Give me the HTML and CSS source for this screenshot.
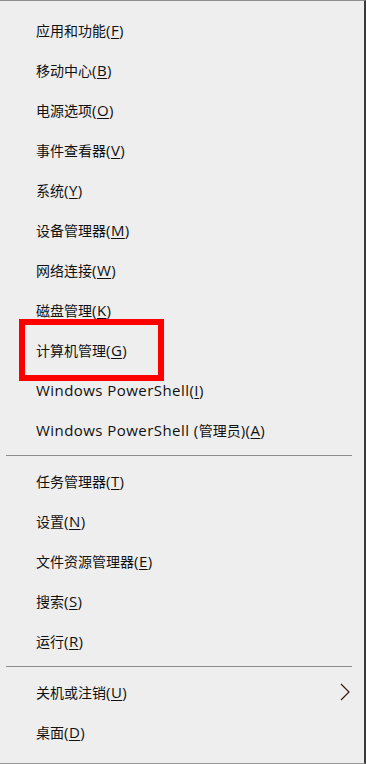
FILE: index.html
```html
<!DOCTYPE html>
<html lang="zh-CN">
<head>
<meta charset="utf-8">
<link rel="stylesheet" href="styles.css">
</head>
<body>
<div class="menu">
  <ul class="group first">
    <li class="item">应用和功能<span class="en">(<u>F</u>)</span></li>
    <li class="item">移动中心<span class="en">(<u>B</u>)</span></li>
    <li class="item">电源选项<span class="en">(<u>O</u>)</span></li>
    <li class="item">事件查看器<span class="en">(<u>V</u>)</span></li>
    <li class="item">系统<span class="en">(<u>Y</u>)</span></li>
    <li class="item">设备管理器<span class="en">(<u>M</u>)</span></li>
    <li class="item">网络连接<span class="en">(<u>W</u>)</span></li>
    <li class="item">磁盘管理<span class="en">(<u>K</u>)</span></li>
    <li class="item highlighted">计算机管理<span class="en">(<u>G</u>)</span><span class="mark"></span></li>
    <li class="item"><span class="en">Windows PowerShell(<u>I</u>)</span></li>
    <li class="item"><span class="en">Windows PowerShell (</span>管理员<span class="en">)(<u>A</u>)</span></li>
  </ul>
  <div class="sep"></div>
  <ul class="group">
    <li class="item">任务管理器<span class="en">(<u>T</u>)</span></li>
    <li class="item">设置<span class="en">(<u>N</u>)</span></li>
    <li class="item">文件资源管理器<span class="en">(<u>E</u>)</span></li>
    <li class="item">搜索<span class="en">(<u>S</u>)</span></li>
    <li class="item">运行<span class="en">(<u>R</u>)</span></li>
  </ul>
  <div class="sep"></div>
  <ul class="group">
    <li class="item has-sub"><span>关机或注销<span class="en">(<u>U</u>)</span></span>
      <svg class="chev" width="10" height="18" viewBox="0 0 10 18"><path d="M1 1 L9 9 L1 17" fill="none" stroke="#3a1a10" stroke-width="1.2"/></svg>
    </li>
    <li class="item">桌面<span class="en">(<u>D</u>)</span></li>
  </ul>
</div>
</body>
</html>
```
FILE: styles.css
```css
html, body {
  margin: 0;
  padding: 0;
  width: 366px;
  height: 764px;
  overflow: hidden;
  background: #eeeeee;
}
.menu {
  box-sizing: border-box;
  width: 366px;
  height: 764px;
  background: #eeeeee;
  border-top: 1px solid #8f8f8f;
  border-bottom: 1px solid #9a9a9a;
  border-right: 2px solid #3a3a3a;
  padding-top: 9px;
  font-family: "Noto Sans CJK SC", sans-serif;
  font-size: 14px;
  color: #111;
}
.group {
  list-style: none;
  margin: 0;
  padding: 0;
}
.item {
  position: relative;
  height: 40px;
  line-height: 40px;
  padding-left: 36px;
  white-space: nowrap;
}
.en {
  font-family: "Open Sans", "Noto Sans CJK SC", sans-serif;
  font-size: 15px;
  letter-spacing: 0.45px;
  line-height: 1;
}
.item u {
  text-decoration-thickness: 1px;
  text-underline-offset: 2px;
}
.sep {
  height: 1px;
  background: #8c8c8c;
  margin: 5px 12px 5px 6px;
}
.has-sub {
  display: flex;
  align-items: center;
  padding-right: 14px;
}
.chev {
  margin-left: auto;
  display: block;
}
.mark {
  position: absolute;
  left: 19px;
  top: -11px;
  width: 145px;
  height: 62px;
  box-sizing: border-box;
  border: 6px solid #ff0000;
}
```
